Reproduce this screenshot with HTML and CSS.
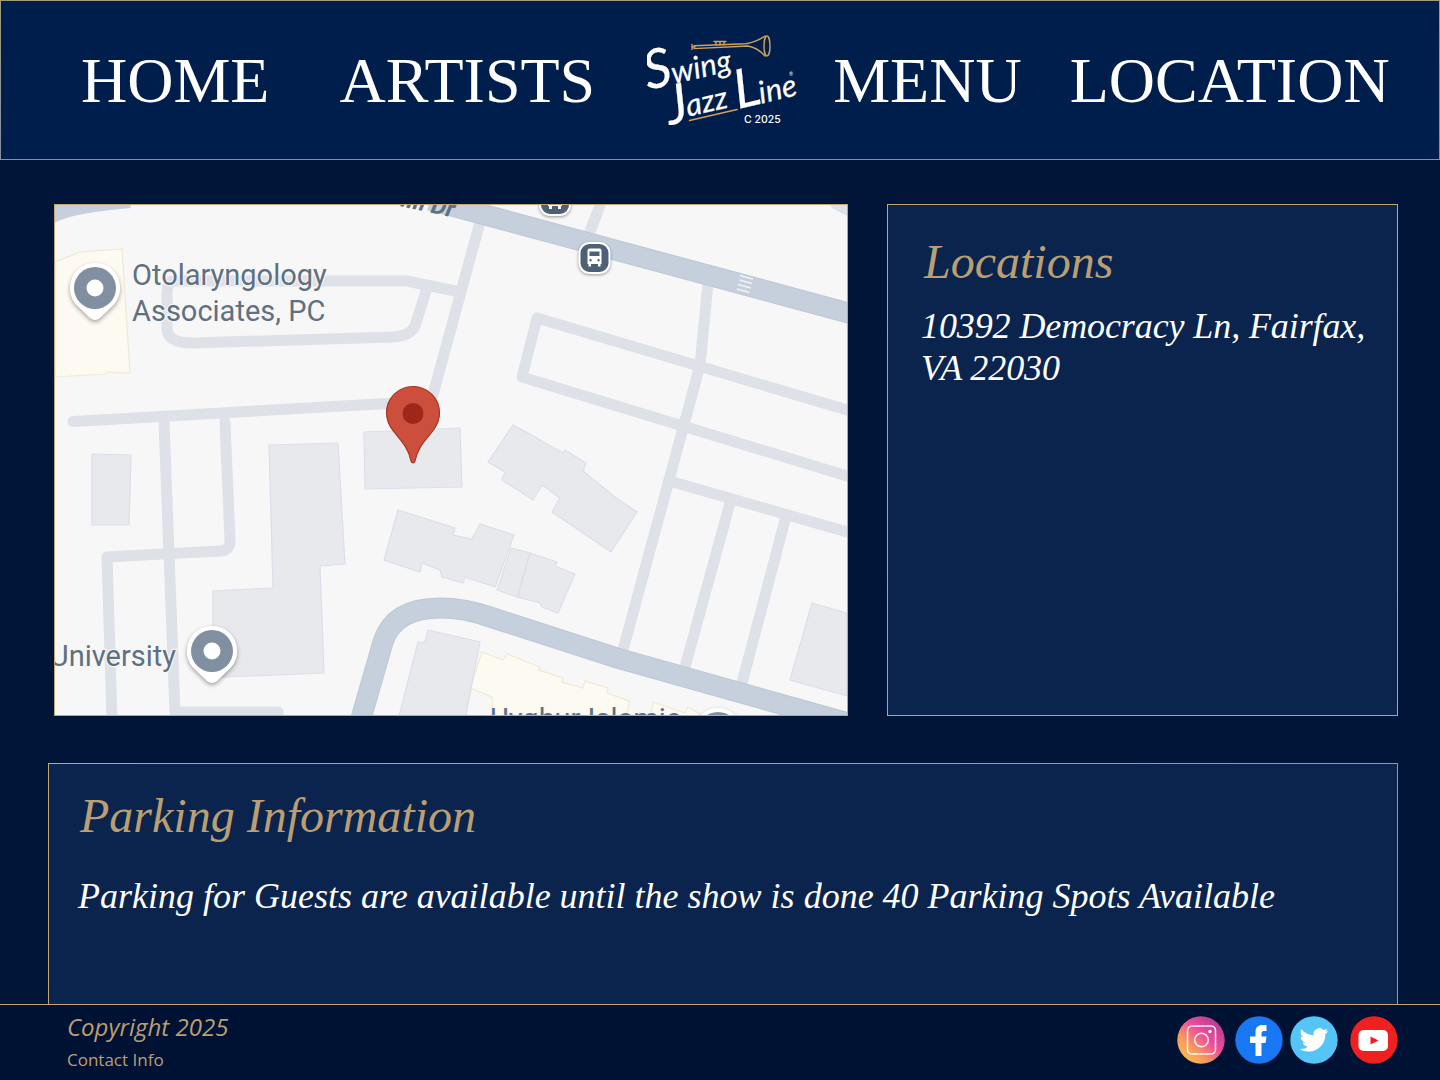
FILE: index.html
```html
<!DOCTYPE html>
<html lang="en">
<head>
<meta charset="utf-8">
<title>Swing Jazz Line - Location</title>
<link rel="stylesheet" href="styles.css">
</head>
<body>
<header class="site-header">
  <nav class="nav">
    <a class="nav-link nav-home" href="#">HOME</a>
    <a class="nav-link nav-artists" href="#">ARTISTS</a>
    <a class="logo" href="#" aria-label="Swing Jazz Line">
      <svg class="logo-svg" viewBox="645 30 150 100" width="150" height="100">
        <g fill="none" stroke="#cfa05c" stroke-width="1.400" stroke-linecap="round" stroke-linejoin="round">
          <path d="M690 43.500v5M690 46h3M692 44.800L744 42.800Q755 41 763 35M692 47.600L746 45Q756 47 763 55"/>
          <ellipse cx="765" cy="45" rx="3" ry="10"/>
          <path d="M714 44v-3.500M718 44v-3.500M722 44v-3.500M712 40.500h12"/>
          <path d="M687.500 119.500L735 108.500" stroke-width="1.600"/>
        </g>
        <g class="logo-script">
          <text transform="translate(646 89) rotate(-13)"><tspan class="logo-cap">S</tspan><tspan class="logo-low" dx="-1">wing</tspan></text>
          <text transform="translate(668 124) rotate(-13)"><tspan class="logo-cap">J</tspan><tspan class="logo-low" dx="-2" dy="-4">azz</tspan></text>
          <text transform="translate(736 108) rotate(-13)"><tspan class="logo-cap">L</tspan><tspan class="logo-low" dx="-2">ine</tspan></text>
        </g>
        <text class="logo-reg" x="787" y="75">®</text>
        <text class="logo-year" x="742" y="122">C 2025</text>
      </svg>
    </a>
    <a class="nav-link nav-menu" href="#">MENU</a>
    <a class="nav-link nav-location" href="#">LOCATION</a>
  </nav>
</header>

<main class="content">
  <section class="top-row">
    <div class="map">
      <svg class="map-svg" viewBox="55 205 792 510" width="792" height="510">
        <rect x="55" y="205" width="792" height="510" fill="#f7f7f7"/>

        <g class="bld-tan">
          <path d="M55 262L80 252L122 249L130 373L107 372L105 374L55 377Z"/>
          <path d="M482 652L503 660L507 654L540 667L539 670L563 678L562 682L583 688L585 681L608 688L607 693L629 701L627 720L493 720L492 697L470 688Z"/>
          <path d="M653 702L650 720L710 720L688 707L685 713Z"/>
        </g>

        <g class="bld">
          <path d="M364 432L460 428L462 487L365 489Z"/>
          <path d="M92 454L131 455L129 525L92 525Z"/>
          <path d="M269 445L338 443L345 564L320 566L324 673L225 677L213 677L213 591L273 588Z"/>
          <path d="M488 462L505 472L502 480L533 500L542 485L560 498L552 512L611 552L637 512L615 497L583 471L586 463L565 450L563 453L528 433L513 425Z"/>
          <path d="M398 510L455 528L453 535L472 539L480 524L514 535L495 587L465 577L463 583L442 577L440 570L422 563L420 572L384 560Z"/>
          <path d="M511 548L530 553L517 597L497 590Z"/>
          <path d="M530 553L557 562L555 566L575 574L558 613L542 607L540 603L518 597Z"/>
          <path d="M812 603L847 613L847 696L790 680Z"/>
          <path d="M428 630L480 642L465 720L398 720L418 642L425 642Z"/>
        </g>

        <g class="road">
          <path d="M460 292L407 281L173 281Q167 281 167 295L167 328Q167 343 193 343L393 337Q410 336 415 326L427 288"/>
          <path d="M480 222L432 398"/>
          <path d="M600 205L590 232"/>
          <path d="M73 421.500L395 403"/>
          <path d="M164 422L175 712L278 712"/>
          <path d="M225 422L230 540Q230 551 220 551L107 557L112 720"/>
          <path d="M708 283L700 365L682 432L623 650"/>
          <path d="M847 410L537 318L522 377L847 476"/>
          <path d="M673 482L847 532"/>
          <path d="M730 503L685 667"/>
          <path d="M785 520L742 683"/>
          <path d="M836 204L850 211"/>
        </g>

        <g class="road-edge">
          <path d="M430 200L852 314"/>
          <path d="M360 722L383 642Q394 608 440 608Q465 608 490 617L617 658L855 725"/>
        </g>
        <g class="road-main">
          <path d="M430 200L852 314"/>
          <path d="M360 722L383 642Q394 608 440 608Q465 608 490 617L617 658L855 725"/>
          <path d="M50 216Q70 205 130 200" class="road-thin"/>
        </g>
        <path class="crosswalk" d="M740 275.500L753 279M739.500 280L752 283.500M738 284.500L751 288M737 289L749.500 292.500"/>

        <text class="road-label" transform="translate(390 204) rotate(12)">Hill Dr</text>

        <g class="poi-label">
          <text x="132" y="285">Otolaryngology</text>
          <text x="132" y="321">Associates, PC</text>
          <text x="176" y="666" text-anchor="end">University</text>
          <text x="490" y="729">Uyghur Islamic</text>
        </g>

        <g class="pin-group">
          <path class="pin-shell" d="M95 263a25 25 0 0 1 18 42.500L100 318q-5 4-10 0L77 305.500A25 25 0 0 1 95 263Z"/>
          <circle class="pin-ring" cx="95" cy="288" r="21"/>
          <circle class="pin-dot" cx="95" cy="288" r="8.500"/>
          <path class="pin-shell" d="M212 626a25 25 0 0 1 18 42.500L217 681q-5 4-10 0L194 668.500A25 25 0 0 1 212 626Z"/>
          <circle class="pin-ring" cx="212" cy="651" r="21"/>
          <circle class="pin-dot" cx="212" cy="651" r="8.500"/>
          <circle class="pin-white" cx="718" cy="733" r="25"/>
          <circle class="pin-ring" cx="718" cy="733" r="21"/>
        </g>

        <g class="bus-group">
          <rect class="bus-box" x="540" y="185" width="30" height="30" rx="10"/>
          <path class="bus-glyph" d="M548 196h14v10h-14zM549 206h3v3h-3zM558 206h3v3h-3z"/>
          <rect class="bus-box" x="579.500" y="243" width="30" height="30" rx="10"/>
          <path class="bus-glyph" fill-rule="evenodd" d="M587.500 250.500q0-2 2-2h10q2 0 2 2V264h-1v2.500h-2.500V264h-7v2.500H588.500V264h-1ZM589.500 251.500v4.500h10v-4.500ZM590.500 259a1.200 1.200 0 1 0 .01 0ZM598.500 259a1.200 1.200 0 1 0 .01 0Z"/>
        </g>

        <path class="red-pin" d="M413 386.500c-14.500 0-26.500 11.500-26.500 26.500 0 6.500 2.500 12 6 17 7 9 16 17 18.500 31 .3 2.500 3.700 2.500 4 0 2.500-14 11.500-22 18.500-31 3.500-5 6-10.500 6-17 0-15-12-26.500-26.500-26.500Z"/>
        <circle class="red-dot" cx="413" cy="413.500" r="10.500"/>
      </svg>
    </div>

    <aside class="panel locations">
      <h2 class="panel-title">Locations</h2>
      <p class="panel-text">10392 Democracy Ln, Fairfax, VA 22030</p>
    </aside>
  </section>

  <section class="panel parking">
    <h2 class="parking-title">Parking Information</h2>
    <p class="parking-text">Parking for Guests are available until the show is done 40 Parking Spots Available</p>
  </section>
</main>

<footer class="site-footer">
  <div class="footer-info">
    <p class="copyright">Copyright 2025</p>
    <a class="contact" href="#">Contact Info</a>
  </div>
  <div class="social">
    <a class="social-link" href="#" aria-label="Instagram">
      <svg width="48" height="48" viewBox="0 0 48 48">
        <defs>
          <linearGradient id="ig" x1="0.1" y1="0.95" x2="0.9" y2="0.1">
            <stop offset="0" stop-color="#fdc04a"/>
            <stop offset="0.3" stop-color="#f79a5e"/>
            <stop offset="0.6" stop-color="#ef4f98"/>
            <stop offset="1" stop-color="#b13a95"/>
          </linearGradient>
        </defs>
        <circle cx="24" cy="24" r="23.700" fill="url(#ig)"/>
        <g fill="none" stroke="#fff" stroke-width="1.500" opacity=".9">
          <rect x="10.500" y="10" width="28" height="28" rx="4.500"/>
          <circle cx="24.500" cy="24" r="6.800"/>
        </g>
        <circle cx="33" cy="15.500" r="1.700" fill="#fff"/>
      </svg>
    </a>
    <a class="social-link" href="#" aria-label="Facebook">
      <svg width="48" height="48" viewBox="0 0 48 48">
        <circle cx="24" cy="24" r="23.700" fill="#1877f2"/>
        <path fill="#fff" d="M20.500 40V27H15V20.500H20.500V16C20.500 11 23.500 9 27.500 9H31.500V15H29C27 15 26.500 16 26.500 18V20.500H31.500L30.500 27H26.500V40Z"/>
      </svg>
    </a>
    <a class="social-link social-twitter" href="#" aria-label="Twitter">
      <svg width="48" height="48" viewBox="0 0 48 48">
        <circle cx="24" cy="24" r="23.700" fill="#55c5f8"/>
        <path fill="#fff" transform="translate(9.500 9.500) scale(1.200)" d="M23.953 4.570a10 10 0 01-2.825.775 4.958 4.958 0 002.163-2.723c-.951.555-2.005.959-3.127 1.184a4.920 4.920 0 00-8.384 4.482C7.690 8.095 4.067 6.130 1.640 3.162a4.822 4.822 0 00-.666 2.475c0 1.710.870 3.213 2.188 4.096a4.904 4.904 0 01-2.228-.616v.060a4.923 4.923 0 003.946 4.827 4.996 4.996 0 01-2.212.085 4.936 4.936 0 004.604 3.417 9.867 9.867 0 01-6.102 2.105c-.390 0-.779-.023-1.170-.067a13.995 13.995 0 007.557 2.209c9.053 0 13.998-7.496 13.998-13.985 0-.210 0-.420-.015-.630A9.935 9.935 0 0024 4.590z"/>
      </svg>
    </a>
    <a class="social-link social-youtube" href="#" aria-label="YouTube">
      <svg width="48" height="48" viewBox="0 0 48 48">
        <circle cx="24" cy="24" r="23.700" fill="#ef2020"/>
        <rect x="8.500" y="14" width="29.500" height="21" rx="5" fill="#fff"/>
        <path d="M20.500 20.500L28.500 24.500L20.500 28.500Z" fill="#ef2020"/>
      </svg>
    </a>
  </div>
</footer>
</body>
</html>
```

FILE: styles.css
```css
* { box-sizing: border-box; }

html, body {
  margin: 0;
  padding: 0;
}

body {
  width: 1440px;
  height: 1080px;
  overflow: hidden;
  background: #001538;
  font-family: "Liberation Serif", "Times New Roman", serif;
}

/* Header */
.site-header {
  height: 160px;
  background: #001e4b;
  border: 1px solid;
  border-image: linear-gradient(180deg, #a39a80, #8490a6) 1;
}

.nav {
  display: flex;
  align-items: center;
  height: 100%;
  padding: 1px 0 0 80px;
}

.nav-link {
  color: #fff;
  font-size: 64px;
  line-height: 74px;
  text-decoration: none;
}

.nav-artists { margin-left: 70px; }
.nav-menu { margin-left: 36px; }
.nav-location { margin-left: 48px; }

.logo {
  display: block;
  margin-left: 52px;
  height: 100px;
}

.logo-svg { display: block; }

.logo-script text {
  font-family: "Lato", sans-serif;
  font-style: italic;
  font-weight: 400;
  fill: #fff;
  stroke: #fff;
  stroke-width: 0.2;
}

.logo-cap { font-size: 54px; }
.logo-low { font-size: 31px; }

.logo-reg {
  font-family: "Lato", sans-serif;
  font-size: 5px;
  fill: #fff;
}

.logo-year {
  font-family: "Inter", sans-serif;
  font-size: 10.5px;
  font-weight: 500;
  fill: #fff;
}

/* Main */
.content {
  height: 844px;
  overflow: hidden;
  padding: 44px 42px 0 48px;
}

.top-row {
  display: flex;
  justify-content: space-between;
  padding-left: 6px;
  height: 512px;
}

.map {
  width: 794px;
  height: 512px;
  border: 1px solid #c4a574;
  background: #f7f7f7;
  overflow: hidden;
}

.map-svg { display: block; }

.bld path { fill: #e8e9ed; stroke: #dcdfea; stroke-width: 1.2; }
.bld-tan path { fill: #fdfaf2; stroke: #efe9d4; stroke-width: 1.2; }

.road path {
  fill: none;
  stroke: #dee1e8;
  stroke-width: 11;
  stroke-linecap: round;
  stroke-linejoin: round;
}

.road-edge path {
  fill: none;
  stroke: #bcc8d6;
  stroke-width: 21;
}

.road-main path {
  fill: none;
  stroke: #c6d0dd;
  stroke-width: 19;
}

.road-main .road-thin { stroke-width: 16; }

.crosswalk {
  fill: none;
  stroke: #f0f2f5;
  stroke-width: 1.5;
}

.road-label {
  font-family: "Roboto", sans-serif;
  font-size: 24px;
  font-weight: 700;
  font-style: italic;
  fill: #5f7080;
}

.poi-label text {
  font-family: "Roboto", sans-serif;
  font-size: 29px;
  fill: #5f7080;
  stroke: #f7f7f7;
  stroke-width: 2.5;
  paint-order: stroke;
}

.pin-shell, .pin-white {
  fill: #fff;
  filter: drop-shadow(0 2px 2px rgba(0, 0, 0, .35));
}
.pin-ring { fill: #8090a0; }
.pin-dot { fill: #fff; }

.bus-box {
  fill: #4e6077;
  stroke: #fff;
  stroke-width: 2;
  filter: drop-shadow(0 1px 1.5px rgba(0, 0, 0, .4));
}
.bus-glyph { fill: #fff; }

.red-pin { fill: #cb4f3c; stroke: #a8321f; stroke-width: 1.2; }
.red-dot { fill: #9e271a; }

/* Panels */
.panel {
  background: #0a244e;
  border: 1px solid;
}

.locations {
  width: 511px;
  height: 512px;
  padding: 29px 20px 0 33px;
  border-image: linear-gradient(180deg, #c4a574, #9ea6b6) 1;
}

.panel-title {
  margin: 0 0 16px 3px;
  color: #bb9f72;
  font-size: 48px;
  font-style: italic;
  font-weight: 400;
  line-height: 55px;
}

.panel-text {
  margin: 0;
  color: #fff;
  font-size: 36px;
  font-style: italic;
  line-height: 42px;
  letter-spacing: -0.1px;
}

.parking {
  height: 280px;
  margin-top: 47px;
  padding: 24px 30px 0 29px;
  border-image: linear-gradient(90deg, #c4a574, #8d97ad) 1;
}

.parking-title {
  margin: 0 0 32px 2px;
  color: #bb9f72;
  font-size: 48px;
  font-style: italic;
  font-weight: 400;
  line-height: 55px;
}

.parking-text {
  margin: 0;
  color: #fff;
  font-size: 36px;
  font-style: italic;
  line-height: 42px;
}

/* Footer */
.site-footer {
  display: flex;
  justify-content: space-between;
  height: 76px;
  background: #001234;
  border-top: 1px solid #c4a574;
  padding: 0 42px 0 67px;
}

.footer-info { padding-top: 5px; }

.copyright {
  margin: 0;
  color: #bb9f72;
  font-family: "Open Sans", sans-serif;
  font-size: 24px;
  font-style: italic;
  line-height: 33px;
}

.contact {
  display: block;
  margin-top: 4px;
  color: #bb9f72;
  font-family: "Open Sans", sans-serif;
  font-size: 17px;
  line-height: 25px;
  text-decoration: none;
}

.social {
  display: flex;
  align-items: flex-start;
  padding-top: 11px;
}

.social-link {
  display: block;
  width: 48px;
  height: 48px;
  margin-left: 10px;
}

.social-link svg { display: block; }

.social-twitter { margin-left: 7px; }
.social-youtube { margin-left: 12px; }
```
